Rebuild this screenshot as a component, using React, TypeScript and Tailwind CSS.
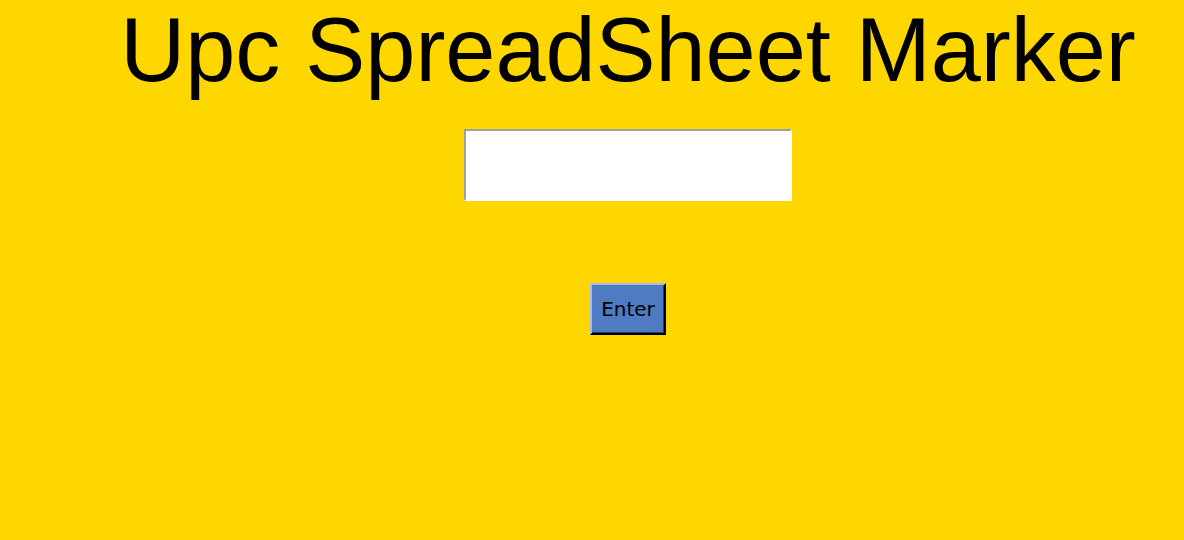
export default function App() {
  return (
    <div className="min-h-[540px] w-full bg-[#ffd700] pl-[72px]">
      <div className="flex flex-col items-center">
        <h1 className="m-0 text-[90px] leading-[100px] font-normal text-black font-['Liberation_Sans',Arial,sans-serif] whitespace-nowrap">
          Upc SpreadSheet Marker
        </h1>
        <input
          type="text"
          className="mt-[29px] h-[72px] w-[328px] bg-white border-2 border-t-[#a0a0a0] border-l-[#a0a0a0] border-r-white border-b-white outline-none"
        />
        <button
          type="button"
          className="mt-[82px] h-[52px] w-[76px] bg-[#4f7bc2] border-2 border-t-[#a9bde9] border-l-[#a9bde9] border-r-black border-b-black shadow-[inset_-1px_-1px_0_#2c3e5c] text-[20px] leading-none text-black font-['DejaVu_Sans',Tahoma,sans-serif]"
        >
          Enter
        </button>
      </div>
    </div>
  );
}
